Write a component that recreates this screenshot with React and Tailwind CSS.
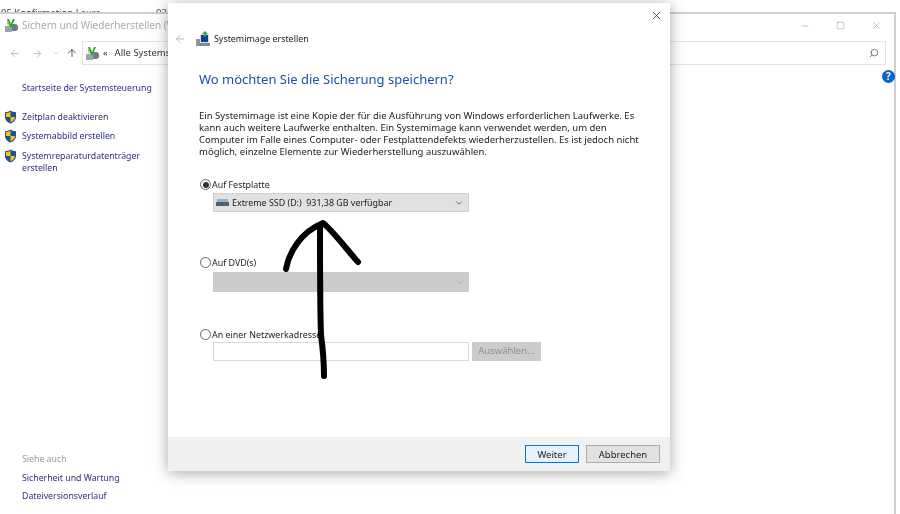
import { ArrowLeft, ArrowRight, ArrowUp, ChevronDown, Search, X, Minus, Square } from "lucide-react";

const Shield = () => (
  <svg width="13" height="14" viewBox="0 0 13 14" className="shrink-0">
    <path d="M6.5 0.5 C8 1.6 10 2.2 12 2.2 V7 C12 10 9.5 12.4 6.5 13.5 C3.5 12.4 1 10 1 7 V2.2 C3 2.2 5 1.6 6.5 0.5Z" fill="#1f4f96" />
    <path d="M6.5 1.8 V7 H11 C11 9.5 8.8 11.3 6.5 12.3 V7 H2 V3 C3.6 3 5.2 2.6 6.5 1.8Z" fill="#f6c21c" />
  </svg>
);

const PanelIcon = () => (
  <svg width="15" height="15" viewBox="0 0 15 15" className="shrink-0">
    <rect x="6" y="6" width="8" height="7" rx="3" fill="#6f7c86" />
    <rect x="1" y="8" width="7" height="6" fill="#9aa4ad" />
    <path d="M3 1 L5 7 L7 10 L11 1 L9 1 L7 6 L5 1Z" fill="#2fa52f" />
    <path d="M3 3 L4 9 L5 3Z" fill="#6cc644" />
  </svg>
);

const ImageIcon = () => (
  <svg width="16" height="16" viewBox="0 0 16 16" className="shrink-0">
    <rect x="1" y="8" width="6" height="7" fill="#8a949c" />
    <rect x="5" y="3" width="9" height="9" fill="#d5dbe0" />
    <rect x="6" y="4" width="7" height="7" fill="#123f96" />
    <path d="M10 0 L13 3 H11 V6 H9 V3 H7Z" fill="#3aa63a" />
    <rect x="4" y="12" width="11" height="3" fill="#7d8a93" />
  </svg>
);

const Radio = ({ checked }) => (
  <span className="w-[11px] h-[11px] rounded-full border border-[#666] bg-white flex items-center justify-center shrink-0">
    {checked && <span className="w-[6px] h-[6px] rounded-full bg-[#333]" />}
  </span>
);

const sideLinks = [
  { text: "Zeitplan deaktivieren", h: "h-[19px]" },
  { text: "Systemabbild erstellen", h: "h-[20px]" },
  { text: "Systemreparaturdatenträger", text2: "erstellen", h: "h-[24px]" },
];

function App() {
  return (
    <div className="relative w-[900px] h-[514px] overflow-hidden bg-white font-['Noto_Sans',sans-serif] text-[9.5px] blur-[0.5px]">
      <div className="h-[12px] overflow-hidden pl-[1px] flex text-[9.5px] leading-[26px] text-[#444]">
        <span className="w-[155px]">05 Konfirmation  Laura</span>
        <span>03.</span>
      </div>

      {/* back window */}
      <div className="absolute left-0 top-[12px] w-[896px] h-[510px] bg-white border-t-2 border-r-2 border-[#cfcfcf]">
        <div className="flex items-center h-[21px] mt-[1px] pl-[4px] gap-[3px] text-[#aaa] text-[10px]">
          <PanelIcon />
          <span className="whitespace-nowrap">Sichern und Wiederherstellen (Windows 7)</span>
          <div className="ml-auto flex items-center gap-[26px] pr-[12px] text-[#888]">
            <Minus size={10} strokeWidth={1.2} />
            <Square size={9} strokeWidth={1.2} />
            <X size={11} strokeWidth={1} />
          </div>
        </div>

        <div className="flex items-center h-[24px] mt-[5px] pl-[9px] pr-[8px] text-[#bbb]">
          <ArrowLeft size={11} />
          <ArrowRight size={11} className="ml-[12px]" />
          <ChevronDown size={8} className="ml-[9px]" />
          <ArrowUp size={12} className="ml-[6px] text-[#555]" />
          <div className="ml-[4px] flex-1 h-[24px] border border-[#e4e4e4] flex items-center pl-[2px] pr-[6px] gap-[3px] text-[#333]">
            <PanelIcon />
            <span className="text-[9px]">«</span>
            <span className="ml-[4px] whitespace-nowrap">Alle Systemsteuerungselemente</span>
            <Search size={10} className="ml-auto text-[#666] -scale-x-100" />
          </div>
        </div>

        <div className="relative flex flex-col h-[440px] pl-[4px] text-[8.75px] text-[#2c2f7e]">
          <div className="pl-[18px] mt-[17px] mb-[15px] leading-[13px]">Startseite der Systemsteuerung</div>
          {sideLinks.map((l) => (
            <div key={l.text} className={`flex gap-[5px] ${l.h}`}>
              <Shield />
              <div className="leading-[12px] pt-[1px]">
                {l.text}
                {l.text2 && <div>{l.text2}</div>}
              </div>
            </div>
          ))}
          <div className="mt-auto pl-[18px] pb-[2px] flex flex-col">
            <div className="text-[#999] leading-[13px]">Siehe auch</div>
            <div className="mt-[6px] leading-[13px]">Sicherheit und Wartung</div>
            <div className="mt-[5px] leading-[13px]">Dateiversionsverlauf</div>
          </div>
          <div className="absolute right-[-1px] top-[5px] w-[13px] h-[13px] rounded-full bg-[#0b63c5] text-white text-[10px] font-bold leading-[13px] text-center">?</div>
        </div>
      </div>

      {/* dialog */}
      <div className="absolute left-[168px] top-[3px] w-[502px] h-[468px] bg-white flex flex-col shadow-[0_2px_14px_rgba(0,0,0,0.35)] text-[#222]">
        <X size={13} strokeWidth={1.5} className="absolute right-[7px] top-[6px] text-[#333]" />
        <div className="flex items-center h-[16px] mt-[28px] pl-[6px] text-[8.9px]">
          <ArrowLeft size={12} className="text-[#bbb]" />
          <span className="ml-[9px]"><ImageIcon /></span>
          <span className="ml-[3px] whitespace-nowrap">Systemimage erstellen</span>
        </div>

        <div className="pl-[31px] flex-1">
          <h1 className="mt-[22px] h-[20px] text-[13px] leading-[20px] text-[#1a4fb0] whitespace-nowrap">Wo möchten Sie die Sicherung speichern?</h1>
          <p className="mt-[21px] leading-[12px] whitespace-nowrap">
            Ein Systemimage ist eine Kopie der für die Ausführung von Windows erforderlichen Laufwerke. Es<br />
            kann auch weitere Laufwerke enthalten. Ein Systemimage kann verwendet werden, um den<br />
            Computer im Falle eines Computer- oder Festplattendefekts wiederherzustellen. Es ist jedoch nicht<br />
            möglich, einzelne Elemente zur Wiederherstellung auszuwählen.
          </p>

          <div className="flex items-center gap-[1px] mt-[20px] h-[13px] pl-[1px] text-[8.9px]">
            <Radio checked />
            <span>Auf Festplatte</span>
          </div>
          <div className="ml-[14px] mt-[2px] w-[256px] h-[19px] bg-[#e1e1e1] border border-[#d0d0d0] flex items-center pl-[2px] pr-[4px] gap-[3px] text-[8.9px]">
            <svg width="13" height="7" viewBox="0 0 13 7" className="shrink-0">
              <rect x="1" y="0" width="11" height="3" fill="#8fb4cf" />
              <rect x="0" y="3" width="13" height="4" fill="#4d6173" />
            </svg>
            <span className="whitespace-pre">Extreme SSD (D:)  931,38 GB verfügbar</span>
            <ChevronDown size={10} className="ml-auto text-[#555]" />
          </div>

          <div className="flex items-center gap-[1px] mt-[44px] h-[13px] pl-[1px] text-[8.9px]">
            <Radio />
            <span>Auf DVD(s)</span>
          </div>
          <div className="ml-[14px] mt-[3px] w-[256px] h-[20px] bg-[#cccccc] flex items-center justify-end pr-[4px]">
            <ChevronDown size={10} className="text-[#aaa]" />
          </div>

          <div className="flex items-center gap-[1px] mt-[36px] h-[13px] pl-[1px] text-[8.9px]">
            <Radio />
            <span className="whitespace-nowrap">An einer Netzwerkadresse</span>
          </div>
          <div className="ml-[14px] mt-[1px] flex gap-[3px]">
            <div className="w-[256px] h-[19px] bg-white border border-[#d9d9d9]" />
            <div className="w-[69px] h-[19px] bg-[#cccccc] text-[#8c8c8c] flex items-center justify-center">Auswählen...</div>
          </div>
        </div>

        <div className="h-[34px] bg-[#f0f0f0] flex items-start justify-end pt-[8px] pr-[10px] gap-[7px]">
          <button className="w-[54px] h-[18px] bg-[#e5f1fb] border border-[#0078d7] text-[#222] leading-[15px]">Weiter</button>
          <button className="w-[74px] h-[18px] bg-[#e1e1e1] border border-[#adadad] text-[#222] leading-[15px]">Abbrechen</button>
        </div>
      </div>

      {/* hand drawn arrow */}
      <svg className="absolute left-0 top-0 pointer-events-none" width="900" height="514" viewBox="0 0 900 514" fill="none">
        <path d="M320 226 C320 270 320 310 321 335 C323 350 324 365 324 376" stroke="#000" strokeWidth="6" strokeLinecap="round" />
        <path d="M286 269 C289 252 301 232 323 223 C335 233 347 250 358 262" stroke="#000" strokeWidth="6" strokeLinecap="round" strokeLinejoin="round" />
      </svg>
    </div>
  );
}

export default App;
